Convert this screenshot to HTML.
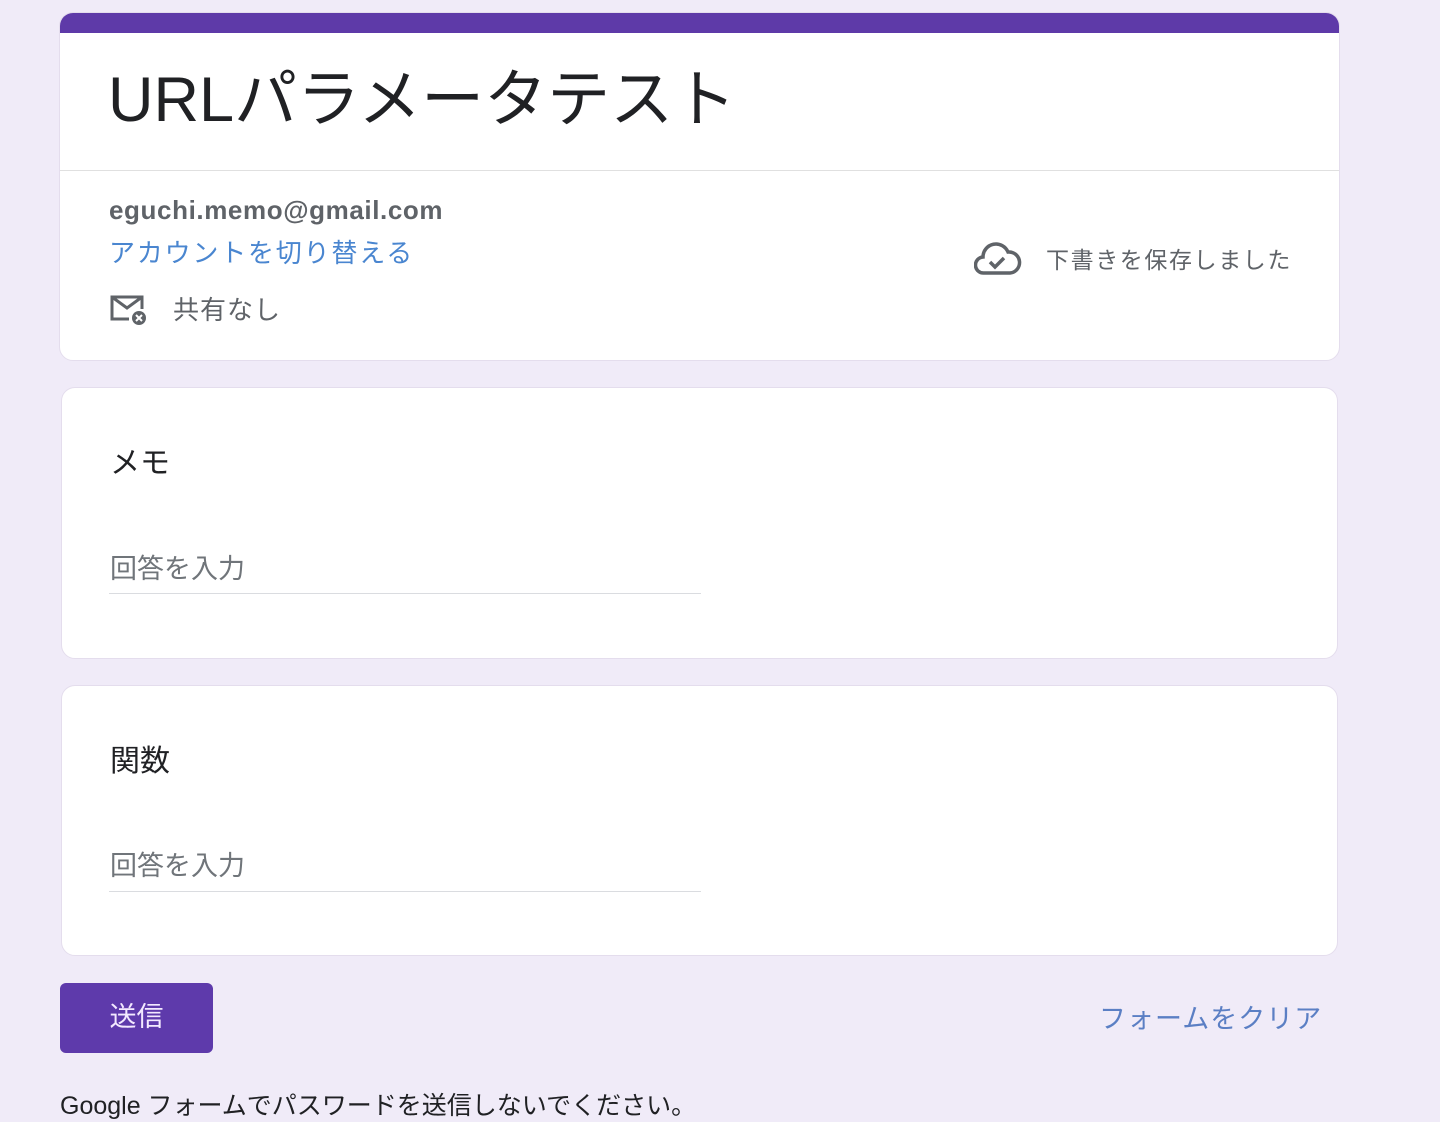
<!DOCTYPE html><html><head><meta charset="utf-8"><style>
body{margin:0;background:#f0ebf8;font-family:"Liberation Sans","Noto Sans CJK JP",sans-serif;width:1440px;height:1103px;overflow:hidden;position:relative}
.card{position:absolute;left:61px;width:1277px;background:#fff;border-radius:14px;border:1px solid #e4dded;box-sizing:border-box}
.abs{position:absolute;white-space:nowrap}
</style></head><body>
<div class="card" style="top:12px;height:349px;overflow:hidden;left:59px;width:1281px">
<div style="height:20px;background:#5e3aa8"></div>
<div class="abs" style="left:48px;top:36px;font-size:63px;color:#202124">URLパラメータテスト</div>
<div style="position:absolute;left:0;right:0;top:157px;border-top:1px solid #e0e0e0"></div>
<div class="abs" style="left:49px;top:182px;font-size:26px;font-weight:bold;color:#5f6368;letter-spacing:0.6px">eguchi.memo@gmail.com</div>
<div class="abs" style="left:49px;top:220px;font-size:26px;color:#4a86d0;letter-spacing:1.8px">アカウントを切り替える</div>
<svg class="abs" style="left:49px;top:280px" width="40" height="36" viewBox="0 0 40 36"><path d="M20 26H3V4h30v12M3 4l15 11 15-11" fill="none" stroke="#5f6368" stroke-width="3"/><circle cx="30" cy="25" r="7" fill="#5f6368"/><path d="M27 22l6 6M33 22l-6 6" stroke="#fff" stroke-width="2"/></svg>
<div class="abs" style="left:113px;top:277px;font-size:26px;color:#5f6368;letter-spacing:1px">共有なし</div>
<svg class="abs" style="left:914px;top:228px" width="48" height="36" viewBox="0 0 48 36"><path d="M12 32H10a8 8 0 0 1-1-16A13 13 0 0 1 34 11a10 10 0 0 1 2 21z" fill="none" stroke="#5f6368" stroke-width="3.5"/><path d="M16 21l5 5 9-9" fill="none" stroke="#5f6368" stroke-width="3.5"/></svg>
<div class="abs" style="left:986px;top:228px;font-size:23px;color:#5f6368;letter-spacing:1.6px">下書きを保存しました</div>
</div>
<div class="card" style="top:387px;height:272px">
<div class="abs" style="left:48px;top:50px;font-size:30px;color:#202124">メモ</div>
<div class="abs" style="left:48px;top:159px;font-size:27px;color:#70757a">回答を入力</div>
<div style="position:absolute;left:47px;top:205px;width:592px;border-top:1.5px solid #dadce0"></div>
</div>
<div class="card" style="top:685px;height:271px">
<div class="abs" style="left:48px;top:50px;font-size:30px;color:#202124">関数</div>
<div class="abs" style="left:48px;top:158px;font-size:27px;color:#70757a">回答を入力</div>
<div style="position:absolute;left:47px;top:205px;width:592px;border-top:1.5px solid #dadce0"></div>
</div>
<div class="abs" style="left:60px;top:983px;width:153px;height:70px;background:#5e3aab;border-radius:6px;color:#f3e9ff;font-size:27px;text-align:center;line-height:68px">送信</div>
<div class="abs" style="left:1099px;top:997px;font-size:27px;color:#5b7fc4;letter-spacing:1px">フォームをクリア</div>
<div class="abs" style="left:60px;top:1086px;font-size:25px;color:#202124">Google フォームでパスワードを送信しないでください。</div>
</body></html>
